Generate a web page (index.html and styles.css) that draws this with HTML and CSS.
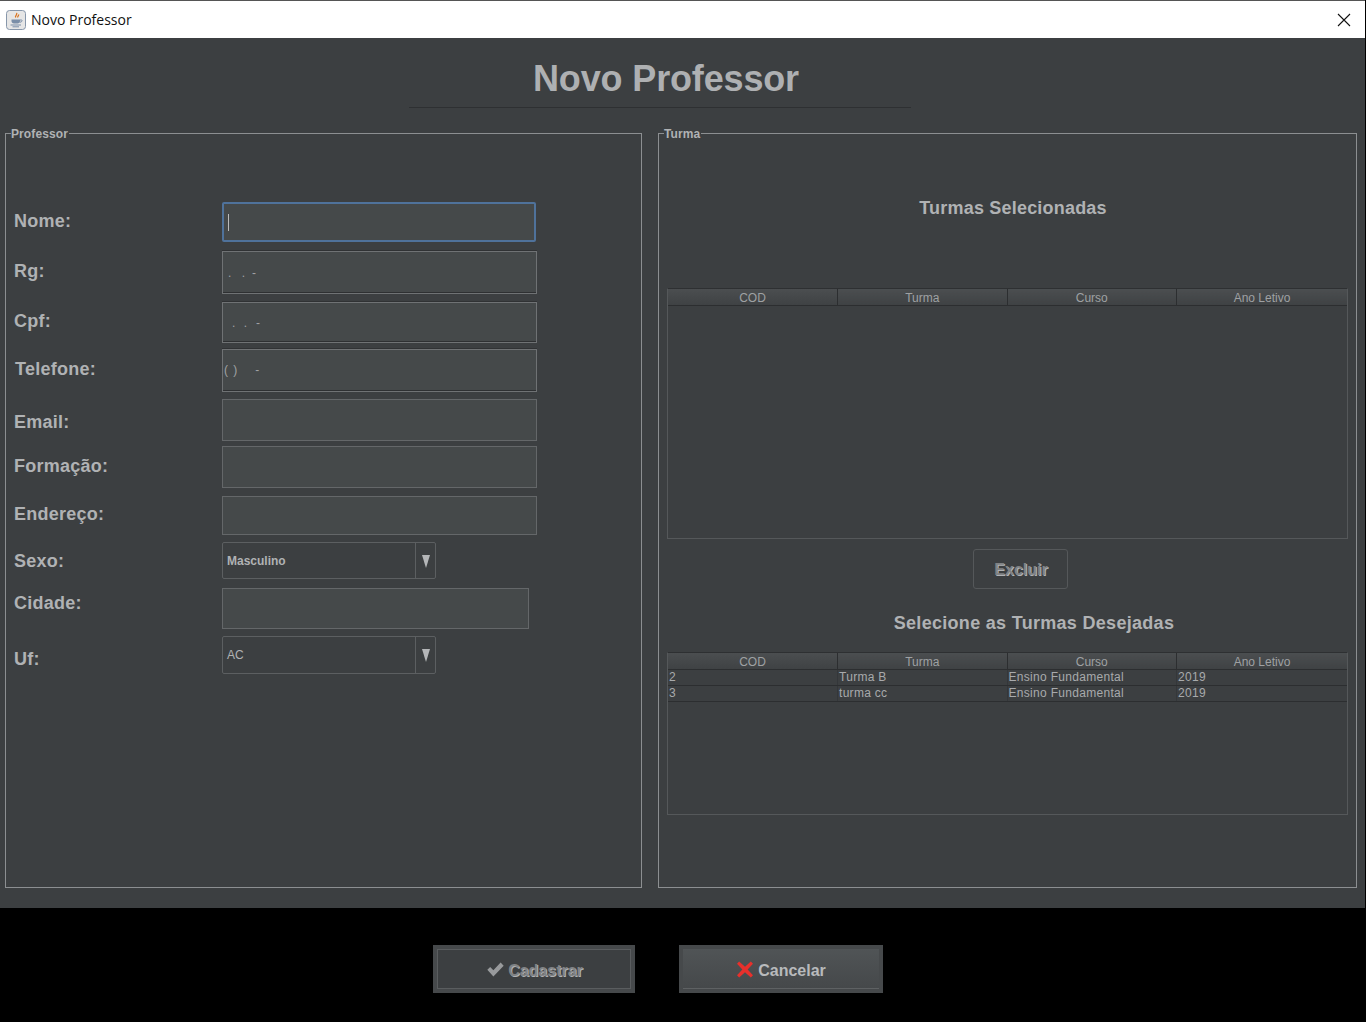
FILE: index.html

```html
<!DOCTYPE html>
<html lang="pt-BR">
<head>
  <meta charset="UTF-8">
  <title>Novo Professor</title>
  <meta name="viewport" content="width=device-width, initial-scale=1.0">
  <link rel="stylesheet" href="styles.css">
</head>
<body>
  <div class="titlebar">
    <svg class="app-icon" width="20" height="20" viewBox="0 0 20 20">
      <rect x="0.5" y="0.5" width="19" height="19" rx="3" fill="#e6e6e6" stroke="#8797ab"/>
      <path d="M10.5 3c1.5 1.5-2 2.500-.8 4.500M12.500 4.500c.8 1-1.500 1.700-.6 3" fill="none" stroke="#d9731e" stroke-width="1.300"/>
      <path d="M5.500 9.500h8.500v1.500c0 1.500-1 2.500-2.500 2.500h-3.500c-1.500 0-2.500-1-2.500-2.500z" fill="#7a8ea8"/>
      <path d="M14 10h1.500c1 0 1 2-1.800 2.300" fill="none" stroke="#7a8ea8"/>
      <path d="M4.500 15h10.500M6.500 16.800h6.500" stroke="#7a8ea8" stroke-width="1"/>
    </svg>
    <span class="app-name">Novo Professor</span>
    <svg class="close" width="14" height="14" viewBox="0 0 14 14">
      <path d="M1 1l12 12M13 1L1 13" stroke="#111" stroke-width="1.100" fill="none"/>
    </svg>
  </div>

  <main class="panel">
    <h1 class="page-title">Novo Professor</h1>

    <div class="groups">
      <fieldset class="group group-professor">
        <legend>Professor</legend>
        <div class="form">
          <label class="lbl lbl-nome">Nome:</label>
          <div class="field field-focus h40"><span class="caret"></span></div>

          <label class="lbl lbl-rg">Rg:</label>
          <div class="field field-mask h43 mask-rg">. .<span class="dash">-</span></div>

          <label class="lbl lbl-cpf">Cpf:</label>
          <div class="field field-mask h41 mask-cpf">. .<span class="dash">-</span></div>

          <label class="lbl lbl-tel">Telefone:</label>
          <div class="field field-mask h43 mask-tel">( )<span class="dash">-</span></div>

          <label class="lbl lbl-email">Email:</label>
          <div class="field h42"></div>

          <label class="lbl lbl-formacao">Formação:</label>
          <div class="field h42"></div>

          <label class="lbl lbl-endereco">Endereço:</label>
          <div class="field h39"></div>

          <label class="lbl lbl-sexo">Sexo:</label>
          <div class="combo h37">
            <span class="combo-text combo-bold">Masculino</span>
            <span class="combo-arrow"><svg width="10" height="14" viewBox="0 0 10 14"><path d="M1 1h8L5 14z" fill="#b4b6b8"/></svg></span>
          </div>

          <label class="lbl lbl-cidade">Cidade:</label>
          <div class="field field-short h41"></div>

          <label class="lbl lbl-uf">Uf:</label>
          <div class="combo h38">
            <span class="combo-text">AC</span>
            <span class="combo-arrow"><svg width="10" height="14" viewBox="0 0 10 14"><path d="M1 1h8L5 14z" fill="#b4b6b8"/></svg></span>
          </div>
        </div>
      </fieldset>

      <fieldset class="group group-turma">
        <legend>Turma</legend>
        <h2 class="sub-title first">Turmas Selecionadas</h2>
        <div class="table-box box-top">
          <table>
            <thead>
              <tr><th>COD</th><th>Turma</th><th>Curso</th><th>Ano Letivo</th></tr>
            </thead>
            <tbody></tbody>
          </table>
        </div>
        <div class="excluir-row">
          <button class="btn-excluir">Excluir</button>
        </div>
        <h2 class="sub-title second">Selecione as Turmas Desejadas</h2>
        <div class="table-box box-bottom">
          <table>
            <thead>
              <tr><th>COD</th><th>Turma</th><th>Curso</th><th>Ano Letivo</th></tr>
            </thead>
            <tbody>
              <tr><td>2</td><td>Turma B</td><td>Ensino Fundamental</td><td>2019</td></tr>
              <tr><td>3</td><td>turma cc</td><td>Ensino Fundamental</td><td>2019</td></tr>
            </tbody>
          </table>
        </div>
      </fieldset>
    </div>
  </main>

  <footer class="actions">
    <button class="action action-off">
      <svg width="17" height="15" viewBox="0 0 16 14"><path d="M0.300 7.300l2.700-2.700 3 3L12.800 0.500l2.900 2.900L6 13.500z" fill="#989a9c"/></svg>
      <span>Cadastrar</span>
    </button>
    <button class="action action-on">
      <svg width="18" height="17" viewBox="0 0 16 16"><path d="M2.500 0.500L8 5.500l5.500-5 2 2L10.500 8l5 5.500-2 2L8 10.500l-5.500 5-2-2L5.500 8l-5-5.500z" fill="#e8302c"/></svg>
      <span>Cancelar</span>
    </button>
  </footer>
</body>
</html>
```

FILE: styles.css

```css
* {
  box-sizing: border-box;
}
html, body {
  margin: 0;
  height: 1022px;
  overflow: hidden;
}
body {
  background-color: #000;
  font-family: "Liberation Sans", Arial, sans-serif;
  color: #bbb;
}

/* window title */
.titlebar {
  display: flex;
  align-items: center;
  width: 1365px;
  height: 38px;
  padding: 1px 12px 0 6px;
  background-color: #fff;
  border-top: 1px solid #555;
}
.app-icon {
  flex: none;
}
.app-name {
  margin-left: 5px;
  padding-bottom: 2px;
  font-family: "Open Sans", sans-serif;
  font-size: 14px;
  color: #111;
}
.close {
  margin-left: auto;
  margin-right: 2px;
}

/* main panel */
.panel {
  width: 1365px;
  height: 870px;
  padding: 0 8px 0 5px;
  background-color: #3c3f41;
}
.page-title {
  width: 502px;
  height: 70px;
  margin: 0 0 0 404px;
  padding: 20px 0 0 12px;
  font-size: 36px;
  line-height: 41px;
  text-align: center;
  letter-spacing: -0.15px;
  color: #aeb0b2;
  border-bottom: 1px solid #2e3032;
}
.groups {
  display: flex;
  justify-content: space-between;
  margin-top: 17px;
}
.group {
  height: 763px;
  margin: 0;
  padding: 0 8px;
  border: 1px solid #8c8f91;
  min-width: 0;
}
.group legend {
  margin-left: -3px;
  padding: 2px 1px 0 0;
  font-size: 12px;
  font-weight: bold;
  line-height: 14px;
  letter-spacing: 0.1px;
  color: #b0b2b4;
}
.group-professor {
  width: 637px;
}
.group-turma {
  width: 699px;
}

/* form on the left */
.form {
  display: grid;
  grid-template-columns: 208px 1fr;
  grid-template-rows: 49px 51px 47px 50px 47px 50px 46px 46px 48px 38px;
  align-items: start;
  margin-top: 61px;
}
.lbl {
  font-size: 18px;
  font-weight: bold;
  line-height: 22px;
  color: #b0b2b4;
  letter-spacing: 0.25px;
}
.lbl-nome { margin-top: 8px; }
.lbl-rg { margin-top: 9px; }
.lbl-cpf { margin-top: 8px; }
.lbl-tel { margin-top: 9px; margin-left: 1px; }
.lbl-email { margin-top: 12px; }
.lbl-formacao { margin-top: 9px; }
.lbl-endereco { margin-top: 7px; }
.lbl-sexo { margin-top: 8px; }
.lbl-cidade { margin-top: 4px; }
.lbl-uf { margin-top: 12px; }

.field {
  width: 315px;
  border: 1px solid #646769;
  background-color: #45494a;
}
.field-short {
  width: 307px;
}
.field-focus {
  width: 314px;
  border: 2px solid #4f729b;
  border-radius: 2px;
  display: flex;
  align-items: center;
  padding-left: 4px;
}
.caret {
  width: 1px;
  height: 17px;
  background-color: #bbb;
}
.field-mask {
  border-color: #6f7274;
  box-shadow: inset 0 -1px 0 #2e3032, 0 -1px 0 #303234;
  white-space: pre;
  font-size: 12px;
  line-height: 40px;
  color: #a0a2a4;
  letter-spacing: 3px;
}
.dash {
  letter-spacing: 0;
}
.mask-rg {
  padding-left: 5px;
  line-height: 42px;
  word-spacing: 1px;
}
.mask-rg .dash { margin-left: 4px; }
.mask-cpf {
  padding-left: 9px;
  word-spacing: -1px;
}
.mask-cpf .dash { margin-left: 6px; }
.mask-tel {
  padding-left: 1px;
  letter-spacing: 1px;
}
.mask-tel .dash { margin-left: 17px; }

.h37 { height: 37px; }
.h38 { height: 38px; }
.h39 { height: 39px; }
.h40 { height: 40px; }
.h41 { height: 41px; }
.h42 { height: 42px; }
.h43 { height: 43px; }

.combo {
  display: flex;
  width: 214px;
  border: 1px solid #5c5f61;
  border-radius: 2px;
  background-color: #3c3f41;
}
.combo-text {
  flex: 1;
  padding-left: 4px;
  align-self: center;
  font-size: 12px;
  color: #b0b2b4;
}
.combo-bold {
  font-weight: bold;
}
.combo-arrow {
  display: flex;
  align-items: center;
  justify-content: center;
  width: 20px;
  border-left: 1px solid #5c5f61;
}

/* right side */
.sub-title {
  margin: 0;
  font-size: 18px;
  font-weight: bold;
  line-height: 20px;
  color: #b0b2b4;
  text-align: center;
}
.sub-title.first {
  width: 692px;
  margin-top: 57px;
  letter-spacing: 0.2px;
}
.sub-title.second {
  width: 734px;
  margin-top: 24px;
  letter-spacing: 0.3px;
}
.table-box {
  width: 681px;
  border: 1px solid #55585a;
  border-top-color: #2e3032;
}
.box-top {
  height: 251px;
  margin-top: 70px;
}
.box-bottom {
  height: 163px;
  margin-top: 19px;
}
table {
  width: 100%;
  border-collapse: collapse;
  table-layout: fixed;
  font-size: 12px;
}
th {
  width: 169.500px;
  height: 16px;
  padding: 2px 0 0;
  font-weight: normal;
  line-height: 14px;
  color: #9fa1a3;
  background: linear-gradient(#4b4e50, #3f4244);
  border-right: 1px solid #2c2e30;
  border-bottom: 1px solid #2c2e30;
}
th:last-child {
  width: auto;
}
td {
  height: 16px;
  padding: 0 0 0 1px;
  line-height: 15px;
  letter-spacing: 0.3px;
  color: #a8aaac;
  border-right: 1px solid #34373a;
  border-bottom: 1px solid #2c2e30;
}
th:last-child, td:last-child {
  border-right: none;
}
.excluir-row {
  display: flex;
  justify-content: center;
  width: 706px;
  margin-top: 10px;
}
.btn-excluir {
  width: 95px;
  height: 40px;
  padding: 2px 0 0 2px;
  font-family: inherit;
  font-size: 16px;
  font-weight: bold;
  color: #808284;
  text-shadow: 1px 1px 0 #b0b2b4;
  background-color: #3c3f41;
  border: 1px solid #55585a;
  border-radius: 3px;
}

/* bottom buttons */
.actions {
  display: flex;
  gap: 44px;
  padding: 37px 0 0 433px;
}
.action {
  display: flex;
  align-items: center;
  justify-content: center;
  gap: 4px;
  height: 48px;
  padding: 3px 0 0;
  font-family: inherit;
  font-size: 16px;
  font-weight: bold;
  border: 4px solid #46494b;
  border-radius: 0;
}
.action svg {
  margin-top: -2px;
}
.action-off {
  width: 202px;
  padding-left: 2px;
  color: #808284;
  text-shadow: 1px 1px 0 #b0b2b4;
  background-color: #3c3f41;
  box-shadow: inset 0 0 0 1px #5a5d5f;
}
.action-on {
  width: 204px;
  color: #b8babc;
  background: linear-gradient(#505456, #45484a);
  box-shadow: inset 0 -1px 0 #5e6163;
}
```
